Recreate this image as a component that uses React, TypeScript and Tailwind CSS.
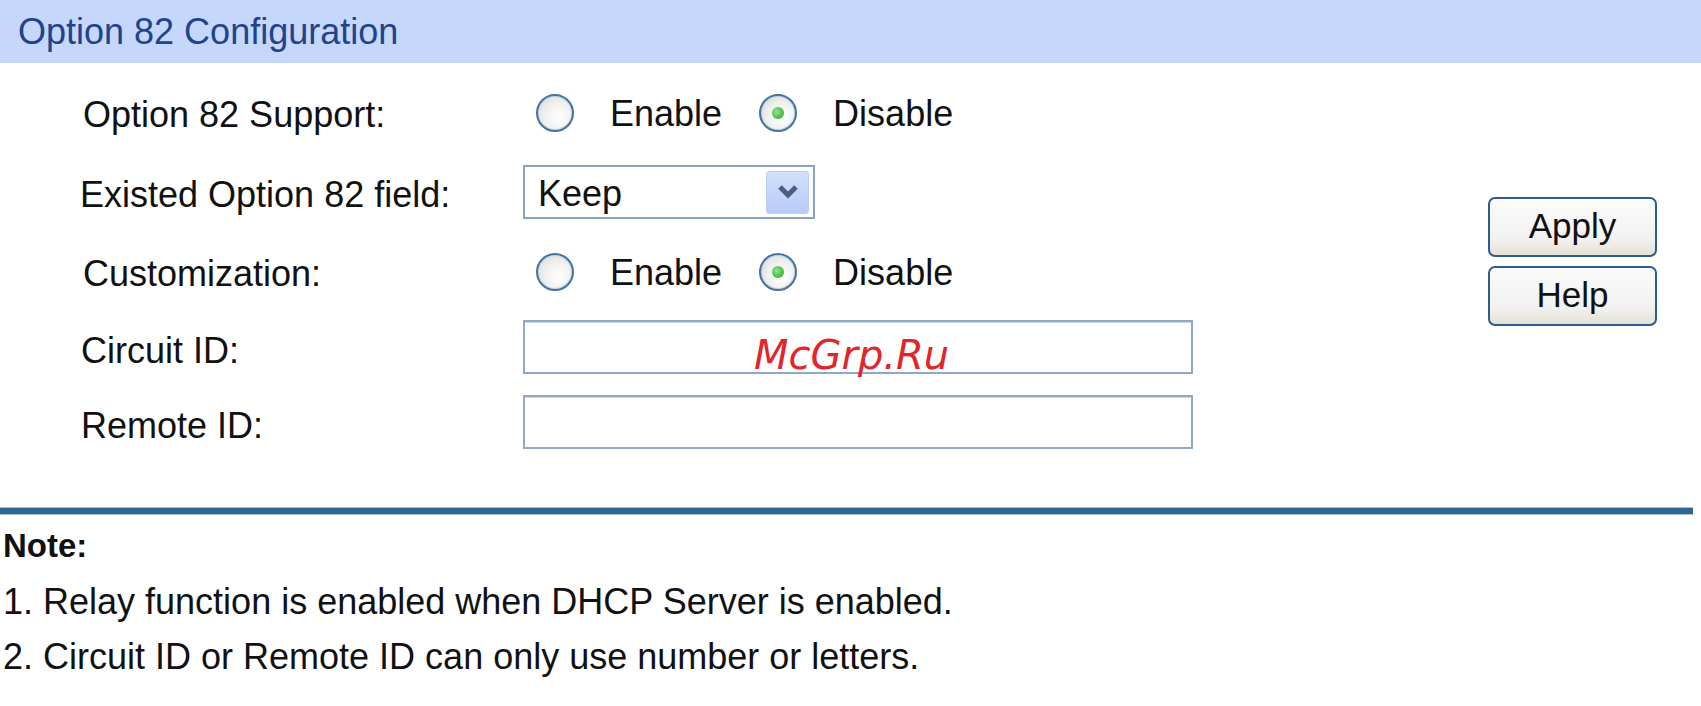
import React from "react";

const Radio = ({ checked }: { checked?: boolean }) => (
  <span className="inline-flex h-[38px] w-[38px] shrink-0 items-center justify-center rounded-full border-2 border-[#44739f] bg-[radial-gradient(circle_at_62%_62%,#ffffff_0%,#efefed_50%,#d3d3cf_100%)] shadow-[inset_0_0_0_1px_#c3d3e3]">
    {checked && (
      <span className="h-[12px] w-[12px] rounded-full bg-[radial-gradient(circle_at_40%_40%,#8ee88e,#1f9f1f)]" />
    )}
  </span>
);

const RadioPair = () => (
  <div className="mt-[4px] flex items-center pl-[13px]">
    <Radio />
    <span className="ml-[36px] mt-[2px]">Enable</span>
    <span className="ml-[37px] flex">
      <Radio checked />
    </span>
    <span className="ml-[36px] mt-[2px]">Disable</span>
  </div>
);

export default function App() {
  return (
    <div className="h-[706px] w-[1701px] overflow-hidden bg-white font-['Liberation_Sans',Arial,sans-serif] text-[36px] text-[#111]">
      {/* Header */}
      <div className="flex h-[63px] items-center bg-[#c5d8fc] pl-[18px] text-[#22438b] leading-[63px]">
        Option 82 Configuration
      </div>

      {/* Form + buttons */}
      <div className="flex items-center pt-[8px]">
        <div className="flex-1">
          <div className="flex h-[80px] items-center">
            <div className="mt-[7px] w-[523px] shrink-0 pl-[83px]">Option 82 Support:</div>
            <RadioPair />
          </div>
          <div className="flex h-[80px] items-center">
            <div className="mt-[7px] w-[523px] shrink-0 pl-[80px]">Existed Option 82 field:</div>
            <div className="mt-[2px] flex h-[54px] w-[292px] items-center justify-between border-2 border-[#86a3c2] bg-white pl-[13px] pr-[4px]">
              <span className="mt-[4px]">Keep</span>
              <span className="flex h-[43px] w-[43px] items-center justify-center rounded-[3px] border border-[#bccdf2] bg-[linear-gradient(#d3e0fc,#b7cbf8)]">
                <svg width="24" height="16" viewBox="0 0 24 16">
                  <polyline points="4,3 12,11 20,3" fill="none" stroke="#4a5d82" strokeWidth="5" />
                </svg>
              </span>
            </div>
          </div>
          <div className="flex h-[78px] items-center">
            <div className="mt-[7px] w-[523px] shrink-0 pl-[83px]">Customization:</div>
            <RadioPair />
          </div>
          <div className="flex h-[76px] items-center">
            <div className="mt-[7px] w-[523px] shrink-0 pl-[81px]">Circuit ID:</div>
            <div className="relative h-[54px] w-[670px] border-2 border-[#8ea8c6] bg-white shadow-[inset_0_1px_0_#c9d6e4]">
              <span className="absolute left-[229px] top-[13px] font-['DejaVu_Sans',sans-serif] text-[40px] italic leading-[40px] text-[#e1262b]">
                McGrp.Ru
              </span>
            </div>
          </div>
          <div className="flex h-[74px] items-center">
            <div className="mt-[7px] w-[523px] shrink-0 pl-[81px]">Remote ID:</div>
            <div className="h-[54px] w-[670px] border-2 border-[#8ea8c6] bg-white shadow-[inset_0_1px_0_#c9d6e4]" />
          </div>
        </div>
        <div className="mb-[8px] mr-[44px] flex w-[169px] flex-col gap-[9px]">
          <button className="h-[60px] w-[169px] rounded-[7px] border-2 border-[#2d5d90] bg-[linear-gradient(#fbfbfb,#f2f2f1_70%,#e4e1d2)] text-[35px] text-[#111]">
            Apply
          </button>
          <button className="h-[60px] w-[169px] rounded-[7px] border-2 border-[#2d5d90] bg-[linear-gradient(#fbfbfb,#f2f2f1_70%,#e4e1d2)] text-[35px] text-[#111]">
            Help
          </button>
        </div>
      </div>

      {/* Separator */}
      <div className="mr-[8px] mt-[48px] h-[8px] border-y border-[#a9c2da] bg-[#2e6593]" />

      {/* Notes */}
      <div className="pl-[3px]">
        <div className="mt-[8px] text-[33px] font-bold leading-[46px]">Note:</div>
        <div className="mt-[5px] leading-[55px]">
          <div>1. Relay function is enabled when DHCP Server is enabled.</div>
          <div>2. Circuit ID or Remote ID can only use number or letters.</div>
        </div>
      </div>
    </div>
  );
}
